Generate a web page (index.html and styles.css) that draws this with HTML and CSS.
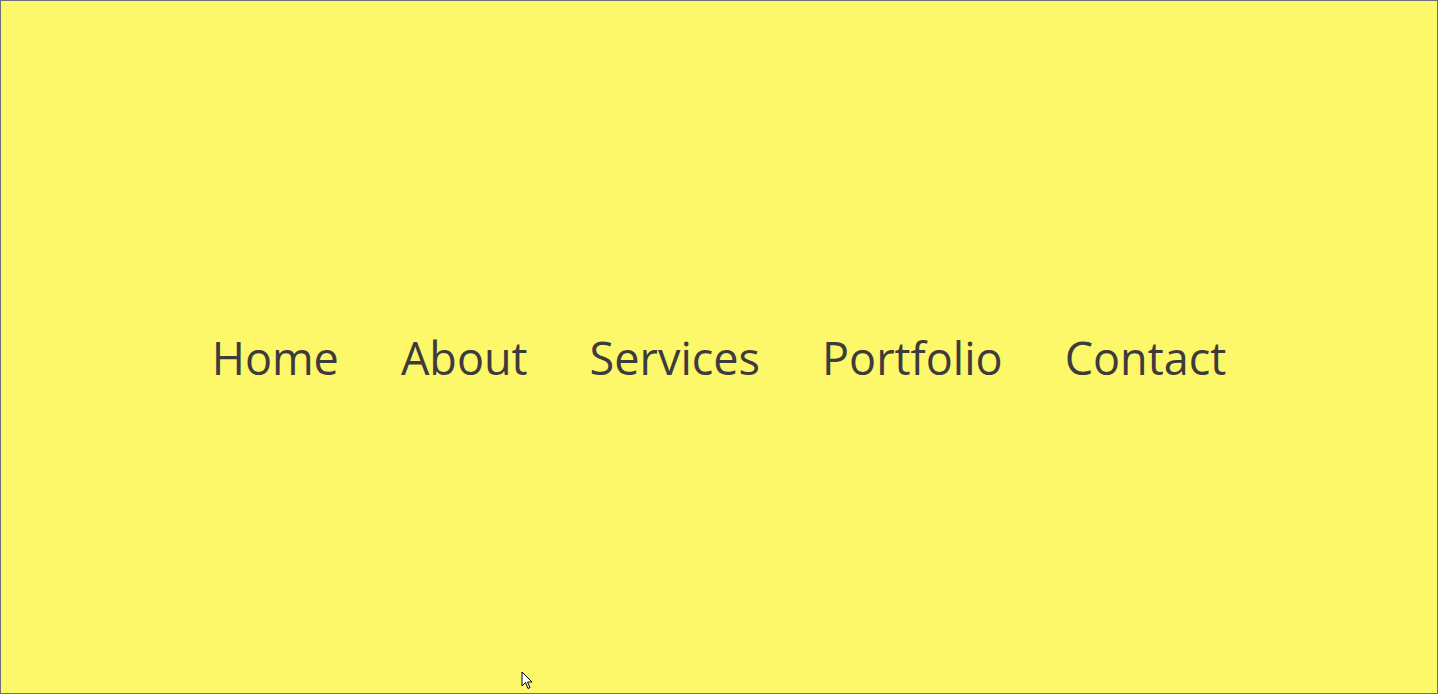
FILE: index.html
```html
<!DOCTYPE html>
<html>
<head>
<meta charset="utf-8">
<link rel="stylesheet" href="styles.css">
</head>
<body>
<div class="page">
  <nav class="nav">
    <a class="nav-link" href="#">Home</a>
    <a class="nav-link" href="#">About</a>
    <a class="nav-link" href="#">Services</a>
    <a class="nav-link" href="#">Portfolio</a>
    <a class="nav-link" href="#">Contact</a>
  </nav>
  <svg class="cursor" width="14" height="20" viewBox="0 0 14 20"><path d="M1 1 L1 15 L4.5 11.5 L7 17.5 L9 16.5 L6.5 11 L11 11 Z" fill="#fff" stroke="#000" stroke-width="1"/></svg>
</div>
</body>
</html>
```
FILE: styles.css
```css
html, body {
  margin: 0;
  padding: 0;
}
.page {
  position: relative;
  box-sizing: border-box;
  height: 694px;
  border: 1px solid #6f6f7a;
  background: #fdf76a;
  display: flex;
  align-items: center;
  justify-content: center;
  padding-top: 21px;
}
.nav {
  display: flex;
  gap: 62px;
  font-family: "Open Sans", "Noto Sans", sans-serif;
  font-size: 45px;
}
.nav-link {
  color: #3d3b3c;
  text-decoration: none;
}
.cursor {
  position: absolute;
  left: 520px;
  top: 670px;
}
```
